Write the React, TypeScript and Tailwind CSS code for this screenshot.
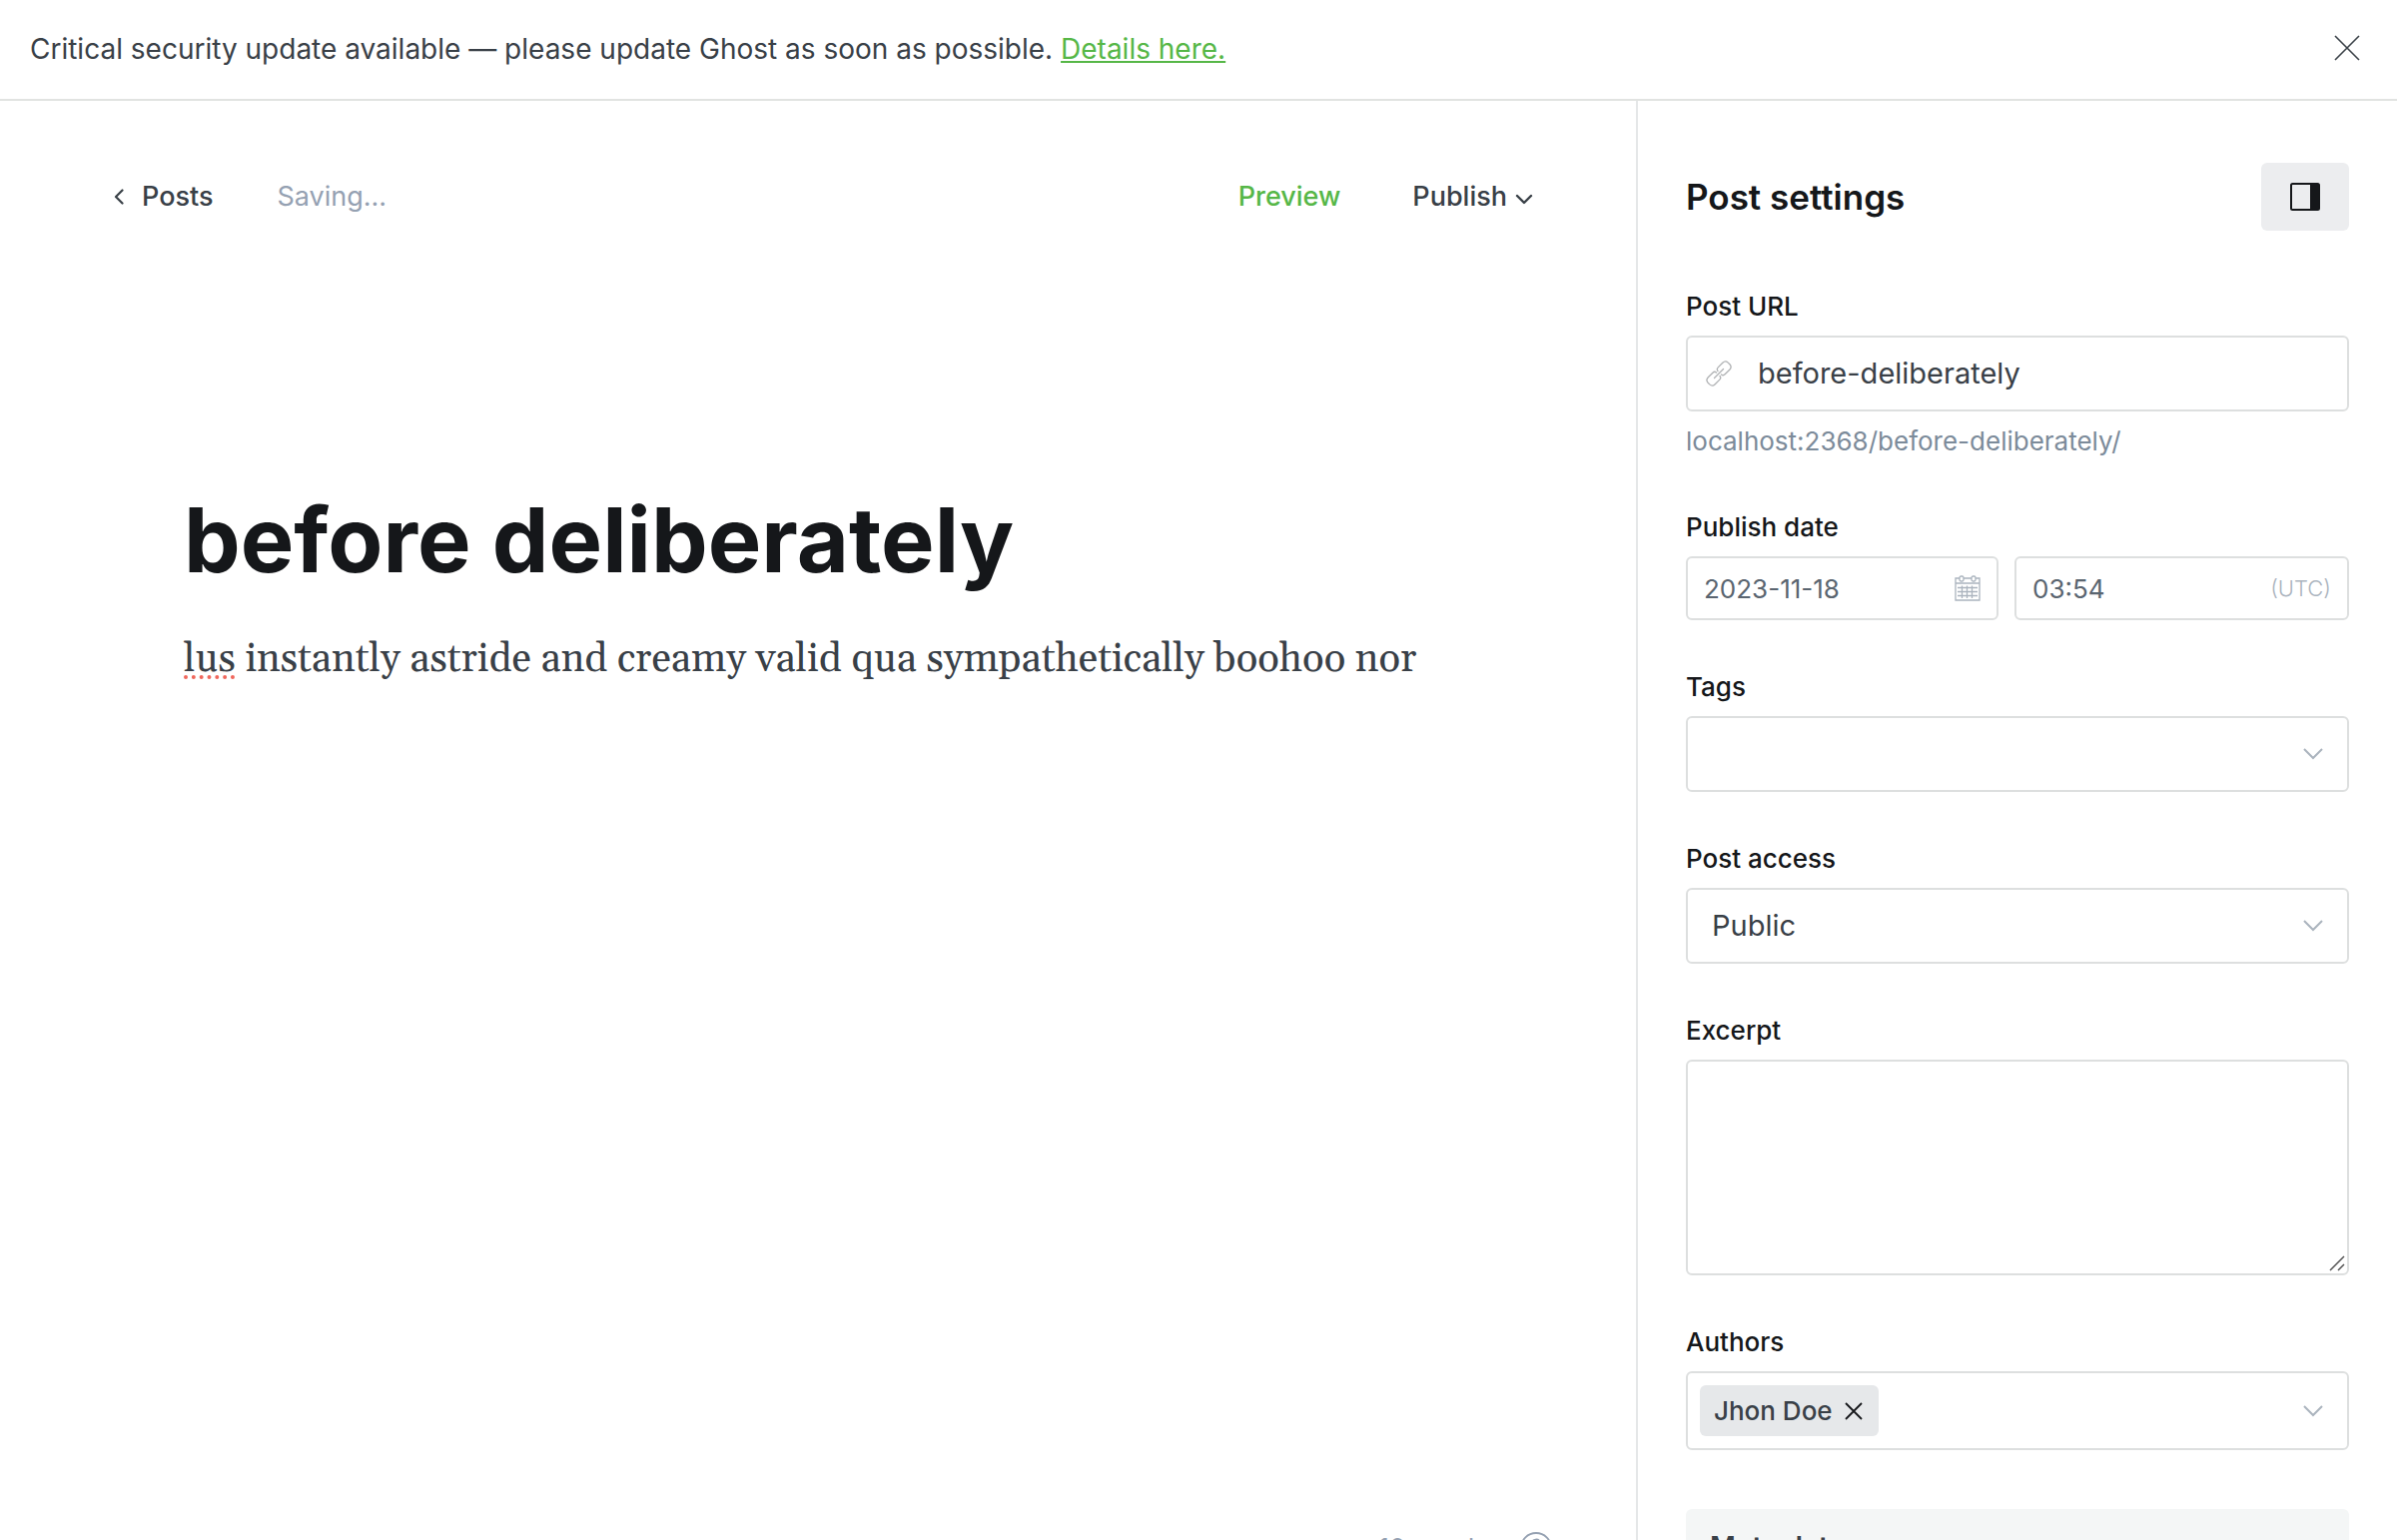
import React from "react";

const fieldBox = "rounded-md border-2 border-[#dddfdf] bg-white";

function Label({ htmlFor, children }: { htmlFor: string; children: React.ReactNode }) {
  return (
    <label htmlFor={htmlFor} className="mb-[13px] block text-[26px] leading-8 font-medium text-[#15171a]">
      {children}
    </label>
  );
}

function ChevronDown({ className }: { className?: string }) {
  return (
    <svg viewBox="0 0 20 12" className={className} fill="none" stroke="currentColor" strokeWidth="2" aria-hidden="true">
      <path d="M1 1l9 9 9-9" />
    </svg>
  );
}

function LinkIcon() {
  return (
    <svg viewBox="0 0 26 26" className="size-[26px] shrink-0 text-[#b0b2b4]" fill="none" stroke="currentColor" strokeWidth="1.3" strokeLinecap="round" aria-hidden="true">
      <path d="M8.5 17.5l9-9" />
      <path d="M12 10.5c-1-1.200-.8-2.600.2-3.600l4.600-4.600c1.800-1.800 3.800-1.700 5.400-.2l1.700 1.700c1.500 1.600 1.600 3.600-.2 5.400l-4.600 4.600c-1 1-2.400 1.200-3.600.2" />
      <path d="M10.500 12c-1.200-1-2.600-.8-3.600.2l-4.600 4.600c-1.800 1.800-1.700 3.800-.2 5.400l1.700 1.700c1.600 1.500 3.600 1.600 5.400-.2l4.600-4.600c1-1 1.200-2.400.2-3.600" />
    </svg>
  );
}

function CalendarIcon() {
  return (
    <svg viewBox="0 0 26 26" className="size-[26px] shrink-0 text-[#abb4be]" fill="none" stroke="currentColor" strokeWidth="1.3" aria-hidden="true">
      <path d="M5 3H1v22h24V3h-4M9 3h8M1 8h24" />
      <rect x="5" y="1" width="4" height="5" rx="1.500" />
      <rect x="17" y="1" width="4" height="5" rx="1.500" />
      <path d="M3 12.500h20M3 16.500h20M3 20.500h20M7.500 10.500v12.500M12.500 10.500v12.500M17.500 10.500v12.500" />
    </svg>
  );
}

export default function App() {
  return (
    <div className="flex h-screen flex-col overflow-hidden bg-white font-['Inter',sans-serif] text-[#394047]">
      <aside className="flex shrink-0 items-center justify-between border-b-2 border-[#e1e3e1] py-7 pr-[35px] pl-[30px]">
        <p className="text-[28px] leading-[43px]">
          Critical security update available — please update Ghost as soon as possible.{" "}
          <a href="#details" className="text-[#56b747] underline">Details here.</a>
        </p>
        <button type="button" aria-label="Dismiss" className="mb-[3px] p-0.5 text-[#394047]">
          <svg viewBox="0 0 26 26" className="size-[26px]" fill="none" stroke="currentColor" strokeWidth="1.600" aria-hidden="true">
            <path d="M1 1l24 24M25 1L1 25" />
          </svg>
        </button>
      </aside>

      <div className="flex min-h-0 flex-1">
        <main className="flex min-w-0 flex-1 flex-col">
          <header className="flex items-center justify-between px-[103px] pt-[62px] text-[27px] leading-[68px]">
            <div className="flex items-center gap-16">
              <a href="#posts" className="flex items-center gap-[18px] pl-[11px] font-medium">
                <svg viewBox="0 0 10 16" className="h-4 w-2.5" fill="none" stroke="currentColor" strokeWidth="2.200" strokeLinecap="round" strokeLinejoin="round" aria-hidden="true">
                  <path d="M8.500 1.500L2 8l6.500 6.500" />
                </svg>
                Posts
              </a>
              <span className="text-[#95a1b2]">Saving...</span>
            </div>
            <div className="flex items-center gap-[72px] font-medium">
              <button type="button" className="text-[#56b747]">Preview</button>
              <button type="button" className="flex items-center gap-2">
                Publish
                <svg viewBox="0 0 18 12" className="mt-1.5 h-3 w-[18px]" fill="none" stroke="currentColor" strokeWidth="2.400" strokeLinecap="round" strokeLinejoin="round" aria-hidden="true">
                  <path d="M2 2l7 7 7-7" />
                </svg>
              </button>
            </div>
          </header>

          <article className="flex-1 px-[184px] pt-[250px]">
            <h1 className="text-[90px] leading-[120px] font-bold text-[#15171a]">before deliberately</h1>
            <p className="mt-7 font-[Georgia,Gelasio,'Liberation_Serif',serif] text-[40px] leading-[64px]">
              <span className="underline decoration-[#f0675c] decoration-dotted decoration-4 underline-offset-4">lus</span> instantly astride and creamy valid qua sympathetically boohoo nor
            </p>
          </article>

          <footer className="-mb-6 flex items-center justify-end gap-8 pr-[84px] text-[26px] leading-8 text-[#95a1b2]">
            <span>10 words</span>
            <button type="button" aria-label="Help">
              <svg viewBox="0 0 32 32" className="size-8" fill="none" stroke="currentColor" strokeWidth="1.800" aria-hidden="true">
                <circle cx="16" cy="16" r="15" />
                <path d="M12 11.500a4 4 0 1 1 5.500 3.700c-1 .5-1.500 1-1.500 2.300v1.500M16 22v2" />
              </svg>
            </button>
          </footer>
        </main>

        <section aria-label="Post settings" className="w-[762px] shrink-0 overflow-hidden border-l-2 border-[#e5e7e8] px-12 pt-[62px]">
          <div className="flex items-center justify-between">
            <h2 className="text-[35px] leading-[68px] font-semibold text-[#15171a]">Post settings</h2>
            <button type="button" aria-label="Toggle settings" className="flex h-[68px] w-[88px] items-center justify-center rounded-md bg-[#ecedef]">
              <svg viewBox="0 0 30 28" className="h-7 w-[30px] text-[#15171a]" aria-hidden="true">
                <rect x="1" y="1" width="28" height="26" rx="1.500" fill="none" stroke="currentColor" strokeWidth="2" />
                <path d="M20 1h8a1 1 0 0 1 1 1v24a1 1 0 0 1-1 1h-8z" fill="currentColor" />
              </svg>
            </button>
          </div>

          <div className="mt-[60px]">
            <Label htmlFor="url">Post URL</Label>
            <div className={`flex h-[76px] items-center gap-[26px] pl-[18px] ${fieldBox}`}>
              <LinkIcon />
              <input id="url" defaultValue="before-deliberately" className="min-w-0 flex-1 text-[29px] outline-none" />
            </div>
            <p className="mt-3.5 text-[26px] leading-8 text-[#7c8b9a]">localhost:2368/before-deliberately/</p>
          </div>

          <div className="mt-[54px]">
            <Label htmlFor="date">Publish date</Label>
            <div className="flex gap-4 text-[26px] text-[#5a6570]">
              <div className={`flex h-16 w-[313px] items-center pr-4 pl-4 ${fieldBox}`}>
                <input id="date" defaultValue="2023-11-18" className="min-w-0 flex-1 outline-none" />
                <CalendarIcon />
              </div>
              <div className={`flex h-16 min-w-0 flex-1 items-center px-4 ${fieldBox}`}>
                <input aria-label="Publish time" defaultValue="03:54" className="min-w-0 flex-1 outline-none" />
                <span className="text-[22px] font-light text-[#abb4be]">(UTC)</span>
              </div>
            </div>
          </div>

          <div className="mt-[51px]">
            <Label htmlFor="tags">Tags</Label>
            <div className={`flex h-[76px] items-center pr-6 pl-4 ${fieldBox}`}>
              <input id="tags" className="min-w-0 flex-1 text-[29px] outline-none" />
              <ChevronDown className="h-3 w-5 text-[#abb4be]" />
            </div>
          </div>

          <div className="mt-[51px]">
            <Label htmlFor="access">Post access</Label>
            <div className="relative">
              <select id="access" className={`block h-[76px] w-full appearance-none px-6 text-[29px] ${fieldBox}`}>
                <option>Public</option>
              </select>
              <ChevronDown className="pointer-events-none absolute top-8 right-[26px] h-3 w-5 text-[#abb4be]" />
            </div>
          </div>

          <div className="mt-[51px]">
            <Label htmlFor="excerpt">Excerpt</Label>
            <div className="relative">
              <textarea id="excerpt" className={`block h-[216px] w-full resize-none p-4 text-[29px] ${fieldBox}`} />
              <svg viewBox="0 0 16 16" className="pointer-events-none absolute right-1 bottom-1 size-4" fill="none" stroke="#555" strokeWidth="1.500" aria-hidden="true">
                <path d="M1 15L15 1M9 15l6-6" />
              </svg>
            </div>
          </div>

          <div className="mt-[51px]">
            <Label htmlFor="authors">Authors</Label>
            <div className={`flex h-[79px] items-center pr-6 pl-3 ${fieldBox}`}>
              <span className="flex h-[51px] items-center gap-3 rounded-md bg-[#e6e8ea] pr-4 pl-3.5 text-[26px] font-medium">
                Jhon Doe
                <button type="button" aria-label="Remove Jhon Doe" className="text-[#15171a]">
                  <svg viewBox="0 0 18 18" className="size-[18px]" fill="none" stroke="currentColor" strokeWidth="1.800" aria-hidden="true">
                    <path d="M1 1l16 16M17 1L1 17" />
                  </svg>
                </button>
              </span>
              <input id="authors" className="min-w-0 flex-1 outline-none" />
              <ChevronDown className="h-3 w-5 text-[#abb4be]" />
            </div>
          </div>

          <button type="button" className="mt-[59px] block w-full rounded-md bg-[#f4f6f6] px-6 py-5 text-left text-[28px] leading-9 font-semibold">
            Meta data
          </button>
        </section>
      </div>
    </div>
  );
}
